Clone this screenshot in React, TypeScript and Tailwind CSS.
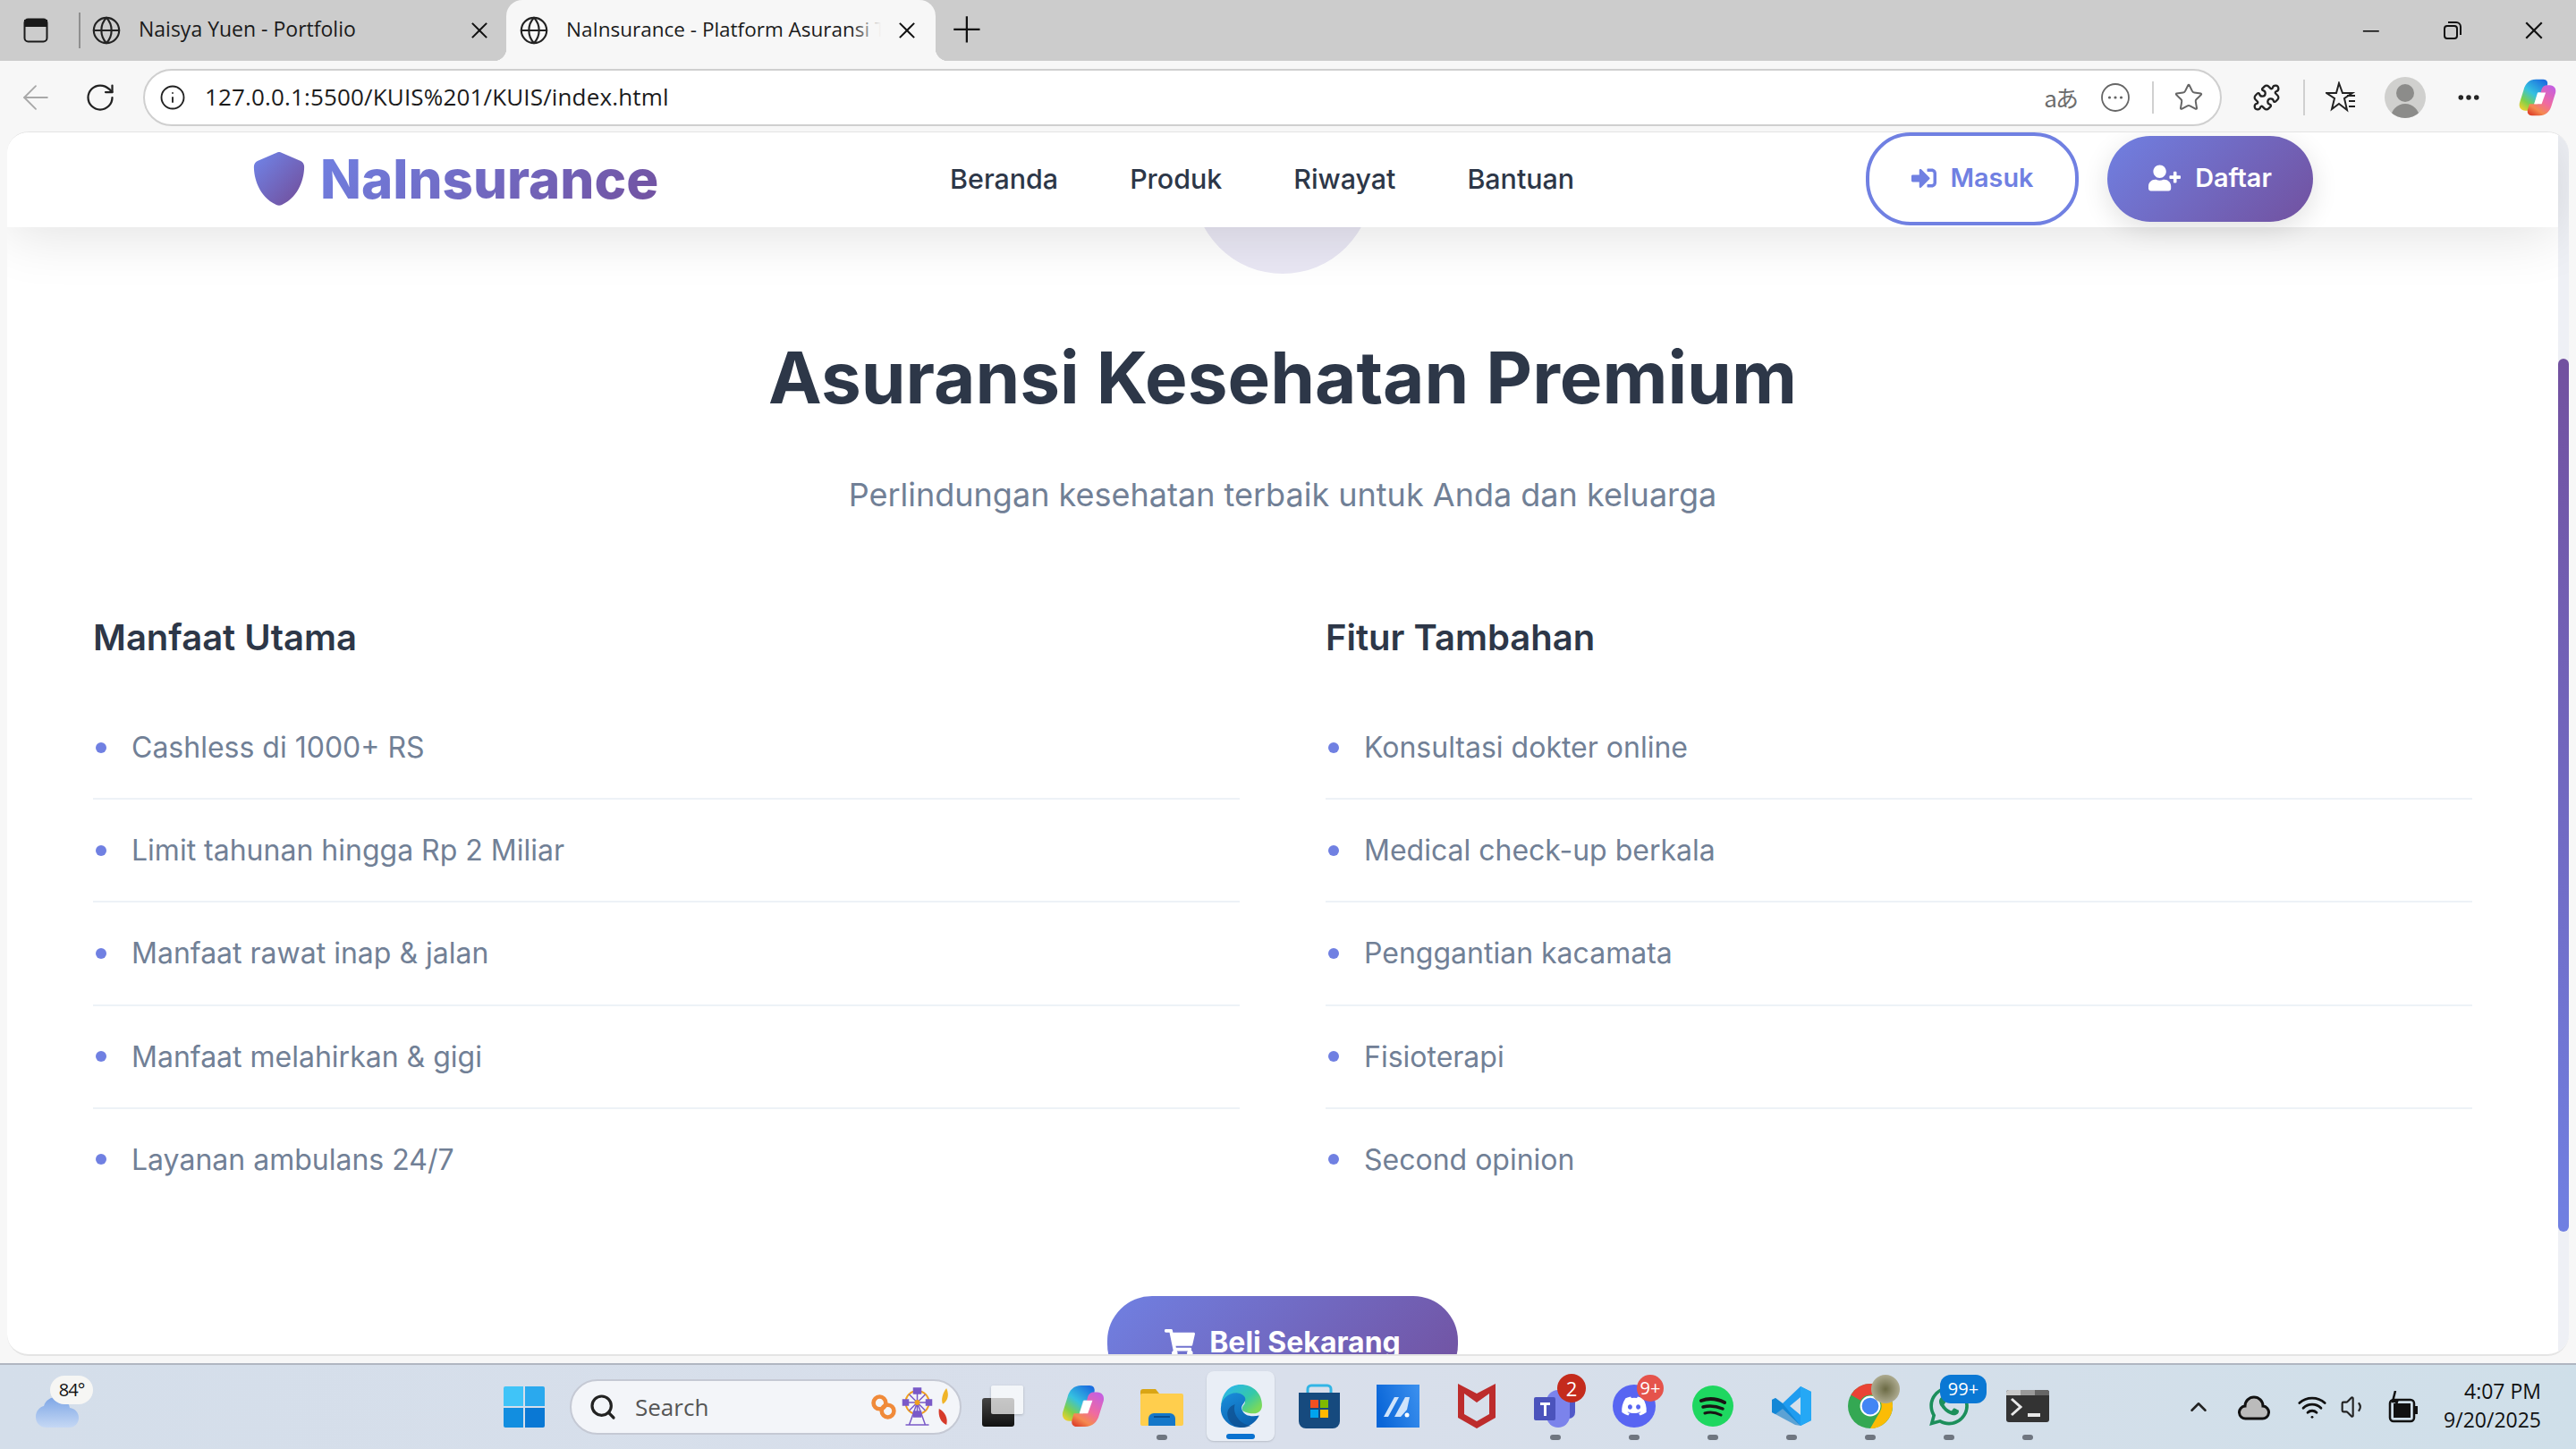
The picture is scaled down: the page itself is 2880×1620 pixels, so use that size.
import React from "react";
import { FaSignInAlt, FaUserPlus, FaShoppingCart, FaDiscord, FaWhatsapp } from "react-icons/fa";
import { VscChromeMinimize, VscChromeClose, VscAdd } from "react-icons/vsc";
import { Globe, Info, RotateCw, ArrowLeft, Star, Puzzle, Ellipsis, Search, ChevronUp, Wifi, Volume1 } from "lucide-react";

const grad = "bg-[linear-gradient(135deg,#7080e2,#72519f)]";

function CopilotIcon({ size }: { size: number }) {
  const id = "cp" + size;
  return (
    <svg width={size} height={size} viewBox="0 0 48 48">
      <defs>
        <linearGradient id={id + "a"} x1="0.8" y1="0" x2="0.1" y2="1">
          <stop offset="0" stopColor="#1c6fe0" />
          <stop offset="0.45" stopColor="#35c1e0" />
          <stop offset="0.75" stopColor="#7fd04a" />
          <stop offset="1" stopColor="#f4d02e" />
        </linearGradient>
        <linearGradient id={id + "b"} x1="0.8" y1="0" x2="0.2" y2="1">
          <stop offset="0" stopColor="#c55fe0" />
          <stop offset="0.5" stopColor="#f06aa0" />
          <stop offset="0.8" stopColor="#f58a50" />
          <stop offset="1" stopColor="#e0482e" />
        </linearGradient>
      </defs>
      <path d="M22 2h9c4 0 6 3 5 7l-2 9H24l-5 17c-1 3-3 5-7 5H9c-5 0-8-4-7-9l5-16C9 7 14 2 22 2z" fill={`url(#${id}a)`} />
      <path d="M26 46h-9c-4 0-6-3-5-7l2-7h10l5-18c1-3 3-5 7-5h3c5 0 8 4 7 9l-5 16C39 41 34 46 26 46z" fill={`url(#${id}b)`} />
      <path d="M25 18h9l-5 14H20z" fill="#fff" />
    </svg>
  );
}

function Sidebar() {
  return (
    <svg width="28" height="28" viewBox="0 0 28 28" fill="none" stroke="#1a1a1a" strokeWidth="2">
      <rect x="1.500" y="1.500" width="25" height="25" rx="4" />
      <path d="M2 3h24v6H2z" fill="#1a1a1a" />
    </svg>
  );
}

function Divider({ h }: { h: string }) {
  return <div className={`w-[2px] bg-[#d0d0d0] ${h}`} />;
}

function TabBar() {
  return (
    <div className="flex h-[68px] items-center bg-[#cccccc] font-['Open_Sans',sans-serif]">
      <div className="flex w-[88px] shrink-0 justify-center pr-[8px]"><Sidebar /></div>
      <div className="h-[40px] w-[2px] bg-[#8f8f8f]" />
      <div className="flex w-[476px] shrink-0 items-center pl-[12px]">
        <Globe size={34} strokeWidth={1.5} className="shrink-0 text-[#222]" />
        <div className="mb-[3px] ml-[19px] w-[353px] shrink-0 truncate text-[23px] text-[#1b1b1b]">Naisya Yuen - Portfolio</div>
        <VscChromeClose size={26} className="ml-[15px] shrink-0 text-[#111]" />
      </div>
      <div className="relative flex h-[68px] w-[480px] shrink-0 items-center rounded-t-[18px] bg-[#f7f7f7] pl-[14px]">
        <div className="absolute bottom-0 left-[-14px] h-[14px] w-[14px] bg-[radial-gradient(circle_at_0_0,transparent_14px,#f7f7f7_14.500px)]" />
        <div className="absolute bottom-0 right-[-14px] h-[14px] w-[14px] bg-[radial-gradient(circle_at_100%_0,transparent_14px,#f7f7f7_14.500px)]" />
        <Globe size={34} strokeWidth={1.5} className="shrink-0 text-[#222]" />
        <div className="relative mb-[3px] ml-[19px] w-[352px] shrink-0 overflow-hidden whitespace-nowrap text-[22.500px] text-[#1b1b1b]">
          NaInsurance - Platform Asuransi Terpercaya
          <div className="absolute inset-y-0 right-0 w-[34px] bg-[linear-gradient(90deg,rgba(247,247,247,0),#f7f7f7)]" />
        </div>
        <VscChromeClose size={26} className="ml-[16px] shrink-0 text-[#111]" />
      </div>
      <VscAdd size={36} className="ml-[18px] text-[#111]" />
      <div className="ml-auto flex items-center">
        <div className="flex w-[92px] justify-center"><VscChromeMinimize size={26} className="text-[#111]" /></div>
        <div className="flex w-[92px] justify-center">
          <svg width="22" height="22" viewBox="0 0 22 22" fill="none" stroke="#111" strokeWidth="2">
            <rect x="2" y="6" width="14" height="14" rx="3" />
            <path d="M6 2h9a5 5 0 0 1 5 5v9" />
          </svg>
        </div>
        <div className="flex w-[92px] justify-center pr-[2px]"><VscChromeClose size={28} className="text-[#111]" /></div>
      </div>
    </div>
  );
}

function Toolbar() {
  return (
    <div className="flex h-[79px] items-center bg-[#f7f7f7] pb-[3px] pt-[5px] font-['Open_Sans',sans-serif]">
      <div className="flex w-[80px] shrink-0 justify-center"><ArrowLeft size={44} strokeWidth={1} className="text-[#a8a8a8]" /></div>
      <div className="flex w-[64px] shrink-0 justify-center"><RotateCw size={36} strokeWidth={1.5} className="text-[#222]" /></div>
      <div className="ml-[16px] flex h-[64px] w-[2324px] shrink-0 items-center rounded-full border-2 border-[#cfcfcf] bg-white pl-[16px] pr-[18px]">
        <Info size={30} strokeWidth={1.5} className="text-[#222]" />
        <span className="ml-[21px] text-[26px] tracking-[0.15px] text-[#1b1b1b]">127.0.0.1:5500/KUIS%201/KUIS/index.html</span>
        <div className="ml-auto flex items-center">
          <span className="font-['Noto_Sans_CJK_JP',sans-serif] text-[26px] tracking-[-2px] text-[#6d6d6d]">aあ</span>
          <svg className="ml-[26px]" width="34" height="34" viewBox="0 0 34 34" fill="none" stroke="#666" strokeWidth="1.800">
            <circle cx="17" cy="17" r="15" />
            <circle cx="10.500" cy="17" r="1.600" fill="#666" stroke="none" />
            <circle cx="17" cy="17" r="1.600" fill="#666" stroke="none" />
            <circle cx="23.500" cy="17" r="1.600" fill="#666" stroke="none" />
          </svg>
          <Divider h="ml-[24px] h-[36px]" />
          <Star size={34} strokeWidth={1.4} className="ml-[22px] text-[#666]" />
        </div>
      </div>
      <Puzzle size={32} strokeWidth={1.7} className="ml-[34px] text-[#222]" />
      <Divider h="ml-[25px] h-[40px]" />
      <svg className="ml-[23px]" width="36" height="36" viewBox="0 0 36 36" fill="none" stroke="#222" strokeWidth="2">
        <path d="M15 2l4 11h11l-9 6 3 13-9-7-8 6 3-12-9-6h11z" />
        <path d="M24 16h9M26 22h7M26 28h7" />
      </svg>
      <div className="ml-[30px] flex h-[46px] w-[46px] items-end justify-center overflow-hidden rounded-full bg-[#d0d0ce]">
        <div className="flex flex-col items-center">
          <div className="mb-[2px] h-[20px] w-[20px] rounded-full bg-[#8c8c8a]" />
          <div className="h-[16px] w-[32px] rounded-t-full bg-[#8c8c8a]" />
        </div>
      </div>
      <Ellipsis size={30} strokeWidth={2.4} className="ml-[33px] text-[#222]" />
      <div className="ml-[40px]"><CopilotIcon size={44} /></div>
    </div>
  );
}

function Nav() {
  return (
    <div className="relative z-10 flex h-[106px] shrink-0 items-center justify-between bg-white pb-[2px] pl-[274px] pr-[274px] shadow-[0_8px_64px_rgba(0,0,0,0.12)]">
      <div className="flex items-center gap-[16px]">
        <svg width="60" height="60" viewBox="0 0 512 512">
          <defs>
            <linearGradient id="sg" x1="0" y1="0" x2="1" y2="1">
              <stop offset="0.1" stopColor="#7080e2" />
              <stop offset="0.9" stopColor="#72519f" />
            </linearGradient>
          </defs>
          <path fill="url(#sg)" d="M256 0c4.6 0 9.2 1 13.4 2.9L457.7 82.8c22 9.3 38.4 31 38.3 57.200c-.5 99.200-41.300 280.700-213.600 363.200c-16.700 8-36.100 8-52.800 0C57.300 420.700 16.500 239.200 16 140c-.1-26.200 16.300-47.900 38.300-57.200L242.700 2.900C246.800 1 251.400 0 256 0z" />
        </svg>
        <span className={`${grad} bg-clip-text text-[60px] font-extrabold leading-[72px] text-transparent`}>NaInsurance</span>
      </div>
      <div className="mt-[2px] flex items-center gap-[80px] text-[30.400px] font-medium text-[#2d3748]">
        <span>Beranda</span>
        <span>Produk</span>
        <span>Riwayat</span>
        <span>Bantuan</span>
      </div>
      <div className="flex items-center gap-[32px]">
        <div className="flex h-[104px] w-[238px] items-center justify-center gap-[16px] rounded-[50px] border-4 border-[#7080e2] bg-white pb-[2px] text-[28.800px] font-semibold text-[#7080e2]">
          <FaSignInAlt size={28} />
          <span>Masuk</span>
        </div>
        <div className={`flex h-[96px] w-[230px] items-center justify-center gap-[16px] rounded-[50px] ${grad} pb-[2px] text-[28.800px] font-semibold text-white shadow-[0_8px_30px_rgba(0,0,0,0.12)]`}>
          <FaUserPlus size={36} />
          <span>Daftar</span>
        </div>
      </div>
    </div>
  );
}

const left = ["Cashless di 1000+ RS", "Limit tahunan hingga Rp 2 Miliar", "Manfaat rawat inap & jalan", "Manfaat melahirkan & gigi", "Layanan ambulans 24/7"];
const right = ["Konsultasi dokter online", "Medical check-up berkala", "Penggantian kacamata", "Fisioterapi", "Second opinion"];

function Column({ title, items }: { title: string; items: string[] }) {
  return (
    <div>
      <h3 className="text-[40px] font-semibold leading-[60px] text-[#2d3748]">{title}</h3>
      <ul className="mt-[36px]">
        {items.map((t, i) => (
          <li key={t} className={`flex items-center py-[28px] text-[32px] leading-[57.200px] text-[#718096] ${i < items.length - 1 ? "border-b-2 border-[#edf2f7]" : ""}`}>
            <span className="ml-[3px] mr-[28px] h-[12px] w-[12px] rounded-full bg-[#7080e2]" />
            {t}
          </li>
        ))}
      </ul>
    </div>
  );
}

function Viewport() {
  return (
    <div className="mx-[8px] flex h-[1369px] overflow-hidden rounded-[24px] border-t border-b-2 border-[#e4e4e4] bg-white">
      <div className="flex min-w-0 flex-1 flex-col">
        <Nav />
        <div className="flex flex-col items-center">
          <div className="-mt-[148px] h-[200px] w-[200px] rounded-full bg-[#e9e7f4]" />
          <h1 className="mt-[68px] text-[80px] font-bold leading-[96px] text-[#2d3748]">Asuransi Kesehatan Premium</h1>
          <p className="mt-[53px] text-[36px] leading-[60px] text-[#718096]">Perlindungan kesehatan terbaik untuk Anda dan keluarga</p>
          <div className="mt-[100px] grid w-full grid-cols-2 gap-[96px] px-[96px]">
            <Column title="Manfaat Utama" items={left} />
            <Column title="Fitur Tambahan" items={right} />
          </div>
          <div className={`mt-[96px] flex h-[104px] w-[392px] shrink-0 items-center justify-center gap-[16px] rounded-[50px] ${grad} text-[32px] font-bold text-white`}>
            <FaShoppingCart size={34} />
            <span>Beli Sekarang</span>
          </div>
        </div>
      </div>
      <div className="w-[12px] shrink-0 bg-[#eef0f5] pt-[253px]">
        <div className="h-[976px] rounded-[6px] bg-[linear-gradient(180deg,#72519f,#7080e2)]" />
      </div>
    </div>
  );
}

function Dot() {
  return <div className="absolute bottom-[10px] left-[38px] h-[6px] w-[12px] rounded-full bg-[#6f7680]" />;
}

function Slot({ children, dot, badge }: { children: React.ReactNode; dot?: boolean; badge?: React.ReactNode }) {
  return (
    <div className="relative flex h-full w-[88px] shrink-0 items-center justify-center pb-[2px]">
      {children}
      {badge}
      {dot && <Dot />}
    </div>
  );
}

function Badge({ text, cls }: { text: string; cls: string }) {
  return <div className={`absolute flex items-center justify-center font-['Open_Sans',sans-serif] text-white ${cls}`}>{text}</div>;
}

function Edge() {
  return (
    <svg width="50" height="50" viewBox="0 0 48 48">
      <defs>
        <linearGradient id="e1" x1="0.2" y1="0" x2="1" y2="0.7"><stop offset="0" stopColor="#2bb5ea" /><stop offset="0.6" stopColor="#35c9a8" /><stop offset="1" stopColor="#7ad95a" /></linearGradient>
        <linearGradient id="e2" x1="0" y1="0" x2="0.6" y2="1"><stop offset="0" stopColor="#1a8fdc" /><stop offset="1" stopColor="#0c62b0" /></linearGradient>
      </defs>
      <path d="M24 1C38 1 47 11 47 23c0 6-4 9-9 9-4 0-8-1-10-2-4-2-2-6 0-8 2-3 0-9-7-9C11 13 4 20 3 24 4 10 12 1 24 1z" fill="url(#e1)" />
      <path d="M3 24C4 16 12 9 21 10c7 1 10 6 7 10-2 3-4 5-2 9 2 5 9 7 18 5-4 8-12 13-20 13C12 47 1 37 3 24z" fill="url(#e2)" />
      <path d="M18 22c-3 8 3 21 17 23-3 1-6 2-9 2-8 0-15-5-16-13-1-5 2-10 8-12z" fill="#0f4f8f" opacity="0.75" />
    </svg>
  );
}

function TaskIcons() {
  return (
    <>
      <Slot>
        <div className="relative mr-[4px] h-[46px] w-[46px]">
          <div className="absolute bottom-0 left-0 h-[32px] w-[36px] rounded-[3px] bg-[linear-gradient(180deg,#444,#111)]" />
          <div className="absolute right-0 top-0 h-[32px] w-[36px] rounded-[2px] bg-white/70 shadow-[0_1px_3px_rgba(0,0,0,.2)]" />
        </div>
      </Slot>
      <Slot><CopilotIcon size={50} /></Slot>
      <Slot dot>
        <svg width="48" height="48" viewBox="0 0 48 48">
          <path d="M0 8a3 3 0 0 1 3-3h14l4 5v6H0z" fill="#d9a514" />
          <rect y="10" width="48" height="36" rx="2" fill="#ffce4d" />
          <path d="M9 46V38a6 6 0 0 1 6-6h18a6 6 0 0 1 6 6v8z" fill="#1477c9" />
          <rect x="15" y="35" width="18" height="2" fill="#0b4e8f" />
        </svg>
      </Slot>
      <div className="relative flex h-full w-[88px] shrink-0 items-center justify-center pb-[2px]">
        <div className="absolute left-[6px] top-[7px] h-[78px] w-[76px] rounded-[8px] bg-[#e9eef6] shadow-[0_1px_2px_rgba(0,0,0,.15)]" />
        <div className="relative"><Edge /></div>
        <div className="absolute bottom-[11px] left-[28px] h-[6px] w-[32px] rounded-full bg-[#0a72d0]" />
      </div>
      <Slot>
        <svg width="46" height="50" viewBox="0 0 46 50">
          <path d="M10 14V6a4 4 0 0 1 4-4h18a4 4 0 0 1 4 4v8" fill="none" stroke="#33b5e5" strokeWidth="3" />
          <path d="M0 10h46v32a8 8 0 0 1-8 8H8a8 8 0 0 1-8-8z" fill="#164a7e" />
          <rect x="13" y="18" width="9" height="9" fill="#f25022" /><rect x="24" y="18" width="9" height="9" fill="#7fba00" />
          <rect x="13" y="29" width="9" height="9" fill="#00a4ef" /><rect x="24" y="29" width="9" height="9" fill="#ffb900" />
        </svg>
      </Slot>
      <Slot>
        <svg width="48" height="48" viewBox="0 0 48 48">
          <defs><linearGradient id="ma" x1="0" y1="0.5" x2="1" y2="0.2"><stop offset="0" stopColor="#0a66d8" /><stop offset="1" stopColor="#3a8fee" /></linearGradient></defs>
          <rect width="48" height="48" fill="url(#ma)" />
          <path d="M8 36l12-22h5L13 36zM20 36l12-22h5l-3 14-7 8z" fill="#cfe4fb" />
          <circle cx="34" cy="34" r="2.500" fill="#fff" />
        </svg>
      </Slot>
      <Slot>
        <svg width="42" height="50" viewBox="0 0 42 50">
          <path d="M0 0l21 11L42 0v38L21 50 0 38zM7 11v23l14 8 14-8V11L21 21z" fill="#bd2c2c" fillRule="evenodd" />
        </svg>
      </Slot>
      <Slot dot badge={<Badge text="2" cls="left-[46px] top-[10px] h-[32px] w-[32px] rounded-full bg-[#c42b1c] text-[22px]" />}>
        <svg width="48" height="48" viewBox="0 0 48 48">
          <rect x="32" y="10" width="14" height="28" rx="7" fill="#5059c9" />
          <rect x="14" y="6" width="26" height="42" rx="13" fill="#7b83eb" />
          <rect x="0" y="14" width="24" height="26" rx="2" fill="#4b53bc" />
          <path d="M7 20h11v3h-4v12h-3V23H7z" fill="#fff" />
        </svg>
      </Slot>
      <Slot dot badge={<Badge text="9+" cls="left-[47px] top-[11px] h-[30px] w-[30px] rounded-full bg-[#e5534b] text-[20px]" />}>
        <div className="flex h-[48px] w-[48px] items-center justify-center rounded-full bg-[#5865f2]"><FaDiscord size={30} className="text-white" /></div>
      </Slot>
      <Slot dot>
        <div className="flex h-[46px] w-[46px] items-center justify-center rounded-full bg-[#1ed760]">
          <svg width="30" height="24" viewBox="0 0 30 24" fill="none" stroke="#191414" strokeLinecap="round">
            <path d="M2 6c8-3 18-2 26 2" strokeWidth="4" />
            <path d="M4 13c7-2 15-1 22 2" strokeWidth="3.500" />
            <path d="M6 20c6-2 12-1 18 2" strokeWidth="3" />
          </svg>
        </div>
      </Slot>
      <Slot dot>
        <svg width="46" height="46" viewBox="0 0 46 46">
          <path d="M33 1l12 6v32l-12 6L13 26l-8 6-4-2V16l4-2 8 6zM33 13L21 23l12 10z" fill="#1f9cf0" />
          <path d="M33 1l12 6v32l-12 6z" fill="#25a8f5" />
          <path d="M5 14l8 6 20 25 -6-1L1 30V16z" fill="#0b7ac4" opacity="0.6" />
        </svg>
      </Slot>
      <Slot dot badge={<div className="absolute left-[45px] top-[11px] h-[32px] w-[32px] rounded-full bg-[radial-gradient(circle,#6b6a44,#c9c6b0)]" />}>
        <svg width="50" height="50" viewBox="0 0 48 48">
          <circle cx="24" cy="24" r="24" fill="#34a853" />
          <path d="M24 0a24 24 0 0 1 20.800 12H24a12 12 0 0 0-10.400 6L3.200 12A24 24 0 0 1 24 0z" fill="#ea4335" />
          <path d="M44.800 12A24 24 0 0 1 24 48l10.400-18A12 12 0 0 0 24 12z" fill="#fbbc05" />
          <circle cx="24" cy="24" r="11" fill="#fff" /><circle cx="24" cy="24" r="9" fill="#4285f4" />
        </svg>
      </Slot>
      <Slot dot badge={<Badge text="99+" cls="left-[34px] top-[11px] h-[32px] w-[52px] rounded-[12px] bg-[#0a78d4] text-[20px]" />}>
        <FaWhatsapp size={50} className="text-[#1c8f5b]" />
      </Slot>
      <Slot dot>
        <div className="h-[36px] w-[48px] overflow-hidden rounded-[3px] bg-[#333]">
          <div className="flex h-[6px] w-full"><div className="h-full w-1/3 bg-[#c8c8c8]" /><div className="h-full w-1/3 bg-[#999]" /><div className="h-full w-1/3 bg-[#666]" /></div>
          <svg width="48" height="30" viewBox="0 0 48 30" fill="none">
            <path d="M6 4l10 9-10 9" stroke="#e8e8e8" strokeWidth="3" />
            <path d="M24 22h14" stroke="#e8e8e8" strokeWidth="4" />
          </svg>
        </div>
      </Slot>
    </>
  );
}

function Taskbar() {
  return (
    <div className="flex h-[96px] items-center border-t-2 border-[#b0b6c1] bg-[linear-gradient(90deg,#d4deea,#d9dfeb_50%,#cfdfe9)] font-['Open_Sans',sans-serif]">
      <div className="relative h-full w-[563px] shrink-0">
        <svg className="absolute left-[40px] top-[30px]" width="48" height="40" viewBox="0 0 48 40">
          <defs><linearGradient id="cl" x1="0" y1="0" x2="0" y2="1"><stop offset="0" stopColor="#7ea6e6" /><stop offset="1" stopColor="#c5d8f4" /></linearGradient></defs>
          <path d="M34 0h10v12H34z" fill="#f5821f" />
          <path d="M12 40C4 40 0 34 0 28s4-11 9-12C11 9 17 6 23 6c8 0 14 5 15 12 6 1 10 5 10 11 0 6-4 11-11 11z" fill="url(#cl)" />
        </svg>
        <div className="absolute left-[56px] top-[12px] flex h-[32px] w-[48px] items-center justify-center rounded-full bg-[#f6f6f4] text-[20px] tracking-[-1px] text-[#111]">84°</div>
      </div>
      <div className="grid h-[46px] w-[46px] shrink-0 grid-cols-2 gap-[2px]">
        <div className="rounded-tl-[2px] bg-[#40c4f8]" />
        <div className="rounded-tr-[2px] bg-[#2aa9ee]" />
        <div className="rounded-bl-[2px] bg-[#128ee0]" />
        <div className="rounded-br-[2px] bg-[#0a78d4]" />
      </div>
      <div className="ml-[28px] flex h-[62px] w-[438px] shrink-0 items-center rounded-full border-2 border-[#c5c9d4] bg-[#f3f5f9] pl-[19px] pr-[10px]">
        <Search size={32} strokeWidth={2.4} className="text-[#222]" />
        <span className="ml-[20px] text-[26px] text-[#555]">Search</span>
        <div className="ml-auto flex items-center">
          <svg width="30" height="32" viewBox="0 0 26 28" fill="none" stroke="#f08a3a" strokeWidth="4"><circle cx="9" cy="10" r="6" /><circle cx="17" cy="18" r="6" /></svg>
          <svg className="ml-[3px]" width="39" height="44" viewBox="0 0 38 44" fill="none" stroke="#7a5ac8" strokeWidth="1.500">
            <circle cx="19" cy="17" r="13" stroke="#f0a020" strokeWidth="2" />
            <path d="M19 4v26M6 17h26M10 8l18 18M28 8L10 26M19 17L10 42M19 17l9 25M6 42h26" />
            <circle cx="19" cy="17" r="3" fill="#f0a020" stroke="none" />
            <rect x="15" y="1" width="8" height="6" fill="#7a5ac8" /><rect x="3" y="14" width="6" height="6" fill="#7a5ac8" /><rect x="29" y="14" width="6" height="6" fill="#7a5ac8" /><rect x="15" y="27" width="8" height="6" fill="#7a5ac8" />
          </svg>
          <svg className="ml-[2px]" width="16" height="42" viewBox="0 0 14 40"><path d="M10 0c3 7 2 13-4 17C4 12 6 5 10 0z" fill="#f0b428" /><path d="M2 22c6 3 10 10 8 17C4 37 1 30 2 22z" fill="#d63a2a" /></svg>
        </div>
      </div>
      <div className="ml-[4px] flex h-full"><TaskIcons /></div>
      <div className="flex flex-1 items-center justify-end">
        <ChevronUp size={30} strokeWidth={2} className="mr-[29px] text-[#222]" />
        <svg className="mr-[30px]" width="36" height="30" viewBox="0 0 36 30" fill="none" stroke="#111" strokeWidth="3"><path d="M9 28a7 7 0 0 1-1-14 10 10 0 0 1 20 0 7 7 0 0 1-1 14z" fill="#bbb" /></svg>
        <Wifi size={34} strokeWidth={2} className="mr-[14px] text-[#111]" />
        <Volume1 size={32} strokeWidth={1.6} className="mr-[22px] text-[#222]" />
        <svg className="mr-[28px]" width="34" height="36" viewBox="0 0 34 36" fill="none"><rect x="2" y="10" width="27" height="24" rx="4" stroke="#111" strokeWidth="2.500" /><rect x="6" y="14" width="19" height="16" fill="#111" /><rect x="30" y="17" width="3" height="9" fill="#111" /><path d="M8 0L5 12h5l-2 6" stroke="#111" strokeWidth="2.500" /></svg>
        <div className="flex flex-col items-end pb-[4px] pr-[39px] text-[23px] leading-[32px] text-[#111]">
          <span>4:07 PM</span>
          <span>9/20/2025</span>
        </div>
      </div>
    </div>
  );
}

export default function App() {
  return (
    <div className="flex h-[1620px] w-[2880px] flex-col overflow-hidden bg-[#f7f7f7] font-['Inter',sans-serif]">
      <TabBar />
      <Toolbar />
      <Viewport />
      <div className="h-[8px] shrink-0" />
      <Taskbar />
    </div>
  );
}
